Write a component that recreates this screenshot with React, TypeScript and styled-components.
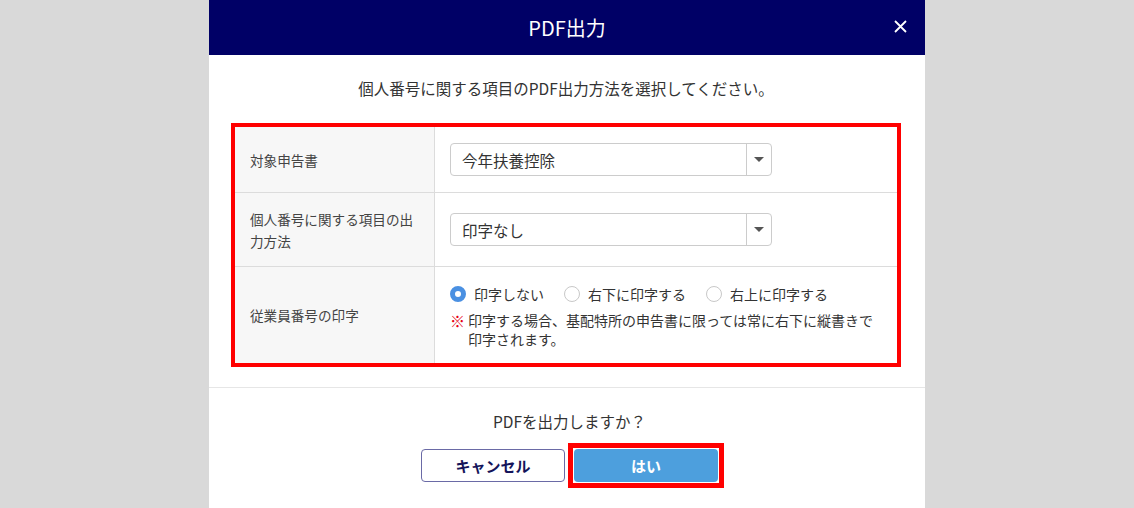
import React from 'react';
import styled, { createGlobalStyle } from 'styled-components';

const GlobalStyle = createGlobalStyle`
  body {
    margin: 0;
    background: #d9d9d9;
    font-family: "Noto Sans CJK JP", "Noto Sans", sans-serif;
    color: #333;
  }
`;

const Modal = styled.section`
  width: 716px;
  margin: 0 auto;
  background: #fff;
  height: 100vh;
  overflow: hidden;
`;

const Header = styled.header`
  position: relative;
  height: 55px;
  background: #000066;
  color: #fff;
  display: flex;
  align-items: center;
  justify-content: center;
  font-size: 20px;
`;

const CloseButton = styled.button`
  position: absolute;
  right: 16px;
  top: 17px;
  width: 18px;
  height: 18px;
  padding: 0;
  border: none;
  background: none;
  display: flex;
  align-items: center;
  justify-content: center;
  cursor: pointer;
`;

const Body = styled.div`
  padding: 22px 24px 20px 22px;
`;

const Lead = styled.p`
  margin: 0 0 24px;
  text-align: center;
  font-size: 15.5px;
  line-height: 22px;
  color: #333;
`;

const Highlight = styled.div`
  border: 4px solid #ff0000;
`;

const Table = styled.div`
  display: grid;
  grid-template-columns: 200px 1fr;
`;

const Label = styled.div<{ $last?: boolean }>`
  display: flex;
  align-items: center;
  padding: 0 15px;
  background: #f7f7f7;
  border-right: 1px solid #dcdcdc;
  border-bottom: ${p => (p.$last ? 'none' : '1px solid #dcdcdc')};
  font-size: 13.6px;
  line-height: 22px;
  color: #444;
`;

const Cell = styled.div<{ $last?: boolean; $height: number }>`
  display: flex;
  flex-direction: column;
  justify-content: center;
  min-height: ${p => p.$height}px;
  padding: 0 15px;
  border-bottom: ${p => (p.$last ? 'none' : '1px solid #dcdcdc')};
  box-sizing: border-box;
`;

const Select = styled.div`
  width: 322px;
  height: 33px;
  box-sizing: border-box;
  border: 1px solid #ccc;
  border-radius: 4px;
  display: flex;
  align-items: center;
  font-size: 15.5px;
  color: #333;
`;

const SelectValue = styled.span`
  flex: 1;
  padding-left: 11px;
`;

const SelectArrow = styled.span`
  width: 24px;
  height: 100%;
  border-left: 1px solid #ccc;
  display: flex;
  align-items: center;
  justify-content: center;

  &::after {
    content: '';
    border-left: 5px solid transparent;
    border-right: 5px solid transparent;
    border-top: 5px solid #555;
  }
`;

const RadioRow = styled.div`
  display: flex;
  align-items: center;
  gap: 20px;
  padding-top: 16px;
`;

const RadioOption = styled.label`
  display: flex;
  align-items: center;
  gap: 8px;
  font-size: 14px;
  line-height: 20px;
  color: #333;
`;

const RadioDot = styled.span<{ $checked?: boolean }>`
  width: 16px;
  height: 16px;
  box-sizing: border-box;
  border-radius: 50%;
  background: #fff;
  border: ${p => (p.$checked ? '5px solid #4a90e2' : '1px solid #c8c8c8')};
`;

const Note = styled.div`
  display: flex;
  gap: 3px;
  margin-top: 7px;
  padding-bottom: 14px;
  font-size: 14px;
  line-height: 19px;
  color: #333;
`;

const NoteMark = styled.span`
  color: #e60012;
  font-size: 15px;
  font-weight: bold;
`;

const Footer = styled.footer`
  border-top: 1px solid #e6e6e6;
  padding: 22px 0 20px 5px;
  display: flex;
  flex-direction: column;
  align-items: center;
`;

const Question = styled.p`
  margin: 0 0 17px;
  font-size: 15.5px;
  line-height: 22px;
  color: #333;
`;

const Buttons = styled.div`
  display: flex;
  gap: 9px;
`;

const Button = styled.button<{ $primary?: boolean }>`
  width: 144px;
  height: 33px;
  border-radius: 4px;
  font-family: inherit;
  font-size: 15px;
  font-weight: bold;
  cursor: pointer;
  background: ${p => (p.$primary ? '#4d9fdd' : '#fff')};
  color: ${p => (p.$primary ? '#fff' : '#14145a')};
  border: ${p => (p.$primary ? 'none' : '1.5px solid #6a6aa6')};
`;

/* red annotation frame drawn over the primary button without moving it */
const Marked = styled.span`
  display: flex;
  margin: -6px;
  padding: 1px;
  border: 5px solid #ff0000;
`;

const App: React.FC = () => {
  return (
    <>
      <GlobalStyle />
      <Modal>
        <Header>
          PDF出力
          <CloseButton aria-label="閉じる">
            <svg width="13" height="13" viewBox="0 0 13 13">
              <path d="M1 1L12 12M12 1L1 12" stroke="#fff" strokeWidth="1.8" />
            </svg>
          </CloseButton>
        </Header>
        <Body>
          <Lead>個人番号に関する項目のPDF出力方法を選択してください。</Lead>
          <Highlight>
            <Table>
              <Label>対象申告書</Label>
              <Cell $height={66}>
                <Select>
                  <SelectValue>今年扶養控除</SelectValue>
                  <SelectArrow />
                </Select>
              </Cell>
              <Label>
                個人番号に関する項目の出
                <br />
                力方法
              </Label>
              <Cell $height={74}>
                <Select>
                  <SelectValue>印字なし</SelectValue>
                  <SelectArrow />
                </Select>
              </Cell>
              <Label $last>従業員番号の印字</Label>
              <Cell $last $height={96}>
                <RadioRow>
                  <RadioOption>
                    <RadioDot $checked />
                    印字しない
                  </RadioOption>
                  <RadioOption>
                    <RadioDot />
                    右下に印字する
                  </RadioOption>
                  <RadioOption>
                    <RadioDot />
                    右上に印字する
                  </RadioOption>
                </RadioRow>
                <Note>
                  <NoteMark>※</NoteMark>
                  <span>
                    印字する場合、基配特所の申告書に限っては常に右下に縦書きで
                    <br />
                    印字されます。
                  </span>
                </Note>
              </Cell>
            </Table>
          </Highlight>
        </Body>
        <Footer>
          <Question>PDFを出力しますか？</Question>
          <Buttons>
            <Button>キャンセル</Button>
            <Marked>
              <Button $primary>はい</Button>
            </Marked>
          </Buttons>
        </Footer>
      </Modal>
    </>
  );
};

export default App;
